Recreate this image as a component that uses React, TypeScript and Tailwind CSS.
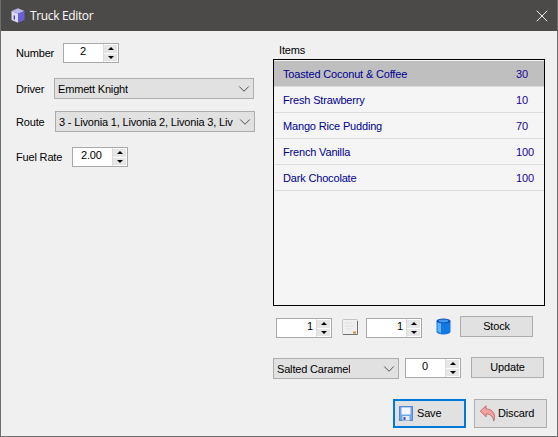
import React from 'react';
import { ChevronDown, X } from 'lucide-react';

const font = { fontFamily: '"Liberation Sans", Arial, sans-serif' };

const Spinner: React.FC<{ value: string; align?: 'left' | 'right'; pad?: string }> = ({ value, align = 'right', pad = 'pr-[3px]' }) => (
  <div className="flex h-[20px] w-[56px] border border-[#a9a9a9] bg-white">
    <div className={`flex-1 leading-[15px] text-black ${pad} ${align === 'right' ? 'text-right' : 'text-left'}`}>{value}</div>
    <div className="flex w-[15px] flex-col gap-[1px] border-l border-[#dcdcdc] bg-white p-[1px] pl-0">
      <div className="flex flex-1 items-center justify-center bg-[#e6e6e6]">
        <div className="h-0 w-0 border-x-[3px] border-b-[3px] border-x-transparent border-b-black" />
      </div>
      <div className="flex flex-1 items-center justify-center bg-[#e6e6e6]">
        <div className="h-0 w-0 border-x-[3px] border-t-[3px] border-x-transparent border-t-black" />
      </div>
    </div>
  </div>
);

const Combo: React.FC<{ value: string; width: string }> = ({ value, width }) => (
  <div className={`flex h-[21px] items-center justify-between border border-[#adadad] bg-[#e1e1e1] pl-[3px] pt-[1px] ${width}`}>
    <span className="overflow-hidden whitespace-nowrap text-black">{value}</span>
    <ChevronDown className="h-[18px] w-[18px] shrink-0 text-[#444]" strokeWidth={1.25} />
  </div>
);

const CubeIcon = () => (
  <svg width="14" height="15" viewBox="0 0 14 15">
    <path d="M7 0.3 13.5 3 7 5.8 0.5 3Z" fill="#b9b5ef" />
    <path d="M0.5 3 7 5.8V14.8L0.5 12Z" fill="#dcd9fa" />
    <path d="M13.5 3 7 5.8V14.8L13.5 12Z" fill="#6a60d6" />
    <path d="M3.3 7.5V11.5" stroke="#3b348f" strokeWidth="1.2" />
  </svg>
);

const NoteIcon = () => (
  <svg width="16" height="16" viewBox="0 0 16 16">
    <rect x="0.5" y="0.5" width="15" height="15" rx="1" fill="#efefef" stroke="#c4c4c4" />
    <path d="M1 15.5H15.5V2" fill="none" stroke="#6f6f6f" />
    <path d="M3 4H10M3 7H12M4 10H9" stroke="#dedede" />
    <path d="M11 12.5h3v2h-3z" fill="#c98a4a" />
  </svg>
);

const DbIcon = () => (
  <svg width="15" height="17" viewBox="0 0 15 17">
    <path d="M0.5 3V13.5C0.5 15.5 4 16.5 7.5 16.5S14.5 15.5 14.5 13.5V3Z" fill="#1477e3" />
    <path d="M1.5 4V13C2.5 14.5 4 15 5 15V5Z" fill="#5fb2f5" />
    <ellipse cx="7.5" cy="3" rx="7" ry="2.5" fill="#0d4fb5" />
    <ellipse cx="7.5" cy="3" rx="5" ry="1.4" fill="#3f9bf0" />
  </svg>
);

const FloppyIcon = () => (
  <svg width="14" height="15" viewBox="0 0 14 15">
    <rect x="0.5" y="0.5" width="13" height="14" fill="#6ea6ec" stroke="#5a86d0" />
    <rect x="2.5" y="1.5" width="9" height="7" fill="#f4f8fe" />
    <rect x="3.5" y="10" width="7" height="4.5" fill="#e4e9f4" />
    <rect x="4.5" y="11" width="2" height="3" fill="#3b5fa8" />
  </svg>
);

const UndoIcon = () => (
  <svg width="17" height="17" viewBox="0 0 17 18">
    <path d="M0.8 6.5 7 0.8V4.2C12.5 4.2 16 7.5 16 12.5 16 14.5 15.5 16 15 17 14.5 12.5 12 9.5 7 9.5V12.5Z" fill="#f4a0a0" stroke="#b25a5a" strokeWidth="0.8" strokeLinejoin="round" />
  </svg>
);

const items = [
  { name: 'Toasted Coconut & Coffee', qty: '30', selected: true },
  { name: 'Fresh Strawberry', qty: '10' },
  { name: 'Mango Rice Pudding', qty: '70' },
  { name: 'French Vanilla', qty: '100' },
  { name: 'Dark Chocolate', qty: '100' },
];

const App: React.FC = () => {
  return (
    <div className="flex h-[437px] w-[558px] flex-col overflow-hidden border border-t-0 border-[#6e6e6e] bg-[#f0f0f0] text-[11px] tracking-[-0.17px]" style={font}>
      <div className="flex h-[31px] shrink-0 items-center bg-[#4c4a48] pl-[11px] pr-[4px] -mx-[1px]">
        <CubeIcon />
        <span className="ml-[5px] text-[12px] tracking-[-0.35px] text-white" style={{ fontFamily: '"Open Sans", sans-serif' }}>Truck Editor</span>
        <X className="ml-auto mr-[2px] h-[20px] w-[20px] text-white" strokeWidth={1.1} />
      </div>

      <div className="flex flex-1">
        <div className="w-[272px] shrink-0 pl-[15px] text-black">
          <div className="mt-[12px] flex items-center">
            <span className="w-[47px] pt-[1px]">Number</span>
            <Spinner value="2" align="left" pad="pl-[16px]" />
          </div>
          <div className="mt-[15px] flex items-center">
            <span className="w-[38px] pt-[1px]">Driver</span>
            <Combo value="Emmett Knight" width="w-[200px]" />
          </div>
          <div className="mt-[12px] flex items-center">
            <span className="w-[39px] pt-[1px]">Route</span>
            <Combo value="3 - Livonia 1, Livonia 2, Livonia 3, Liv" width="w-[200px]" />
          </div>
          <div className="mt-[15px] flex items-center">
            <span className="w-[56px] pt-[1px]">Fuel Rate</span>
            <Spinner value="2.00" align="left" pad="pl-[8px]" />
          </div>
        </div>

        <div className="flex w-[284px] flex-col">
          <div className="mb-[2px] mt-[12px] pl-[6px] leading-[14px] text-black">Items</div>
          <div className="h-[247px] w-[272px] border border-black bg-[#f5f5f5] pt-[1px]">
            {items.map((item) => (
              <div
                key={item.name}
                className={`flex h-[26px] items-center justify-between border-b border-[#dcdcdc] pl-[9px] pr-[4px] pt-[1px] ${item.selected ? 'bg-[#bfbfbf]' : ''}`}
              >
                <span className="text-[#000090]">{item.name}</span>
                <span className="w-[24px] text-left text-[#20009a]">{item.qty}</span>
              </div>
            ))}
          </div>

          <div className="mt-[10px] flex items-start pl-[3px]">
            <div className="mt-[2px]"><Spinner value="1" /></div>
            <div className="ml-[10px] mr-[8px] mt-[3px]"><NoteIcon /></div>
            <div className="mt-[2px]"><Spinner value="1" /></div>
            <div className="ml-[14px] mr-[9px] mt-[2px]"><DbIcon /></div>
            <button className="h-[21px] w-[73px] border border-[#adadad] bg-[#e1e1e1] text-black">Stock</button>
          </div>

          <div className="mt-[19px] flex items-start">
            <div className="mt-[1px]"><Combo value="Salted Caramel" width="w-[126px]" /></div>
            <div className="ml-[6px] mt-[1px]"><Spinner value="0" align="left" pad="pl-[16px]" /></div>
            <button className="ml-[10px] h-[21px] w-[73px] border border-[#adadad] bg-[#e1e1e1] text-black">Update</button>
          </div>

          <div className="mt-[20px] flex justify-end gap-[8px] pr-[10px]">
            <button className="flex h-[29px] w-[73px] items-center border-2 border-[#0078d7] bg-[#e1e1e1] pl-[4px] text-black">
              <FloppyIcon />
              <span className="ml-[4px]">Save</span>
            </button>
            <button className="flex h-[29px] w-[73px] items-center border border-[#adadad] bg-[#e1e1e1] pl-[4px] text-black">
              <UndoIcon />
              <span className="ml-[2px]">Discard</span>
            </button>
          </div>
        </div>
      </div>
    </div>
  );
};

export default App;
